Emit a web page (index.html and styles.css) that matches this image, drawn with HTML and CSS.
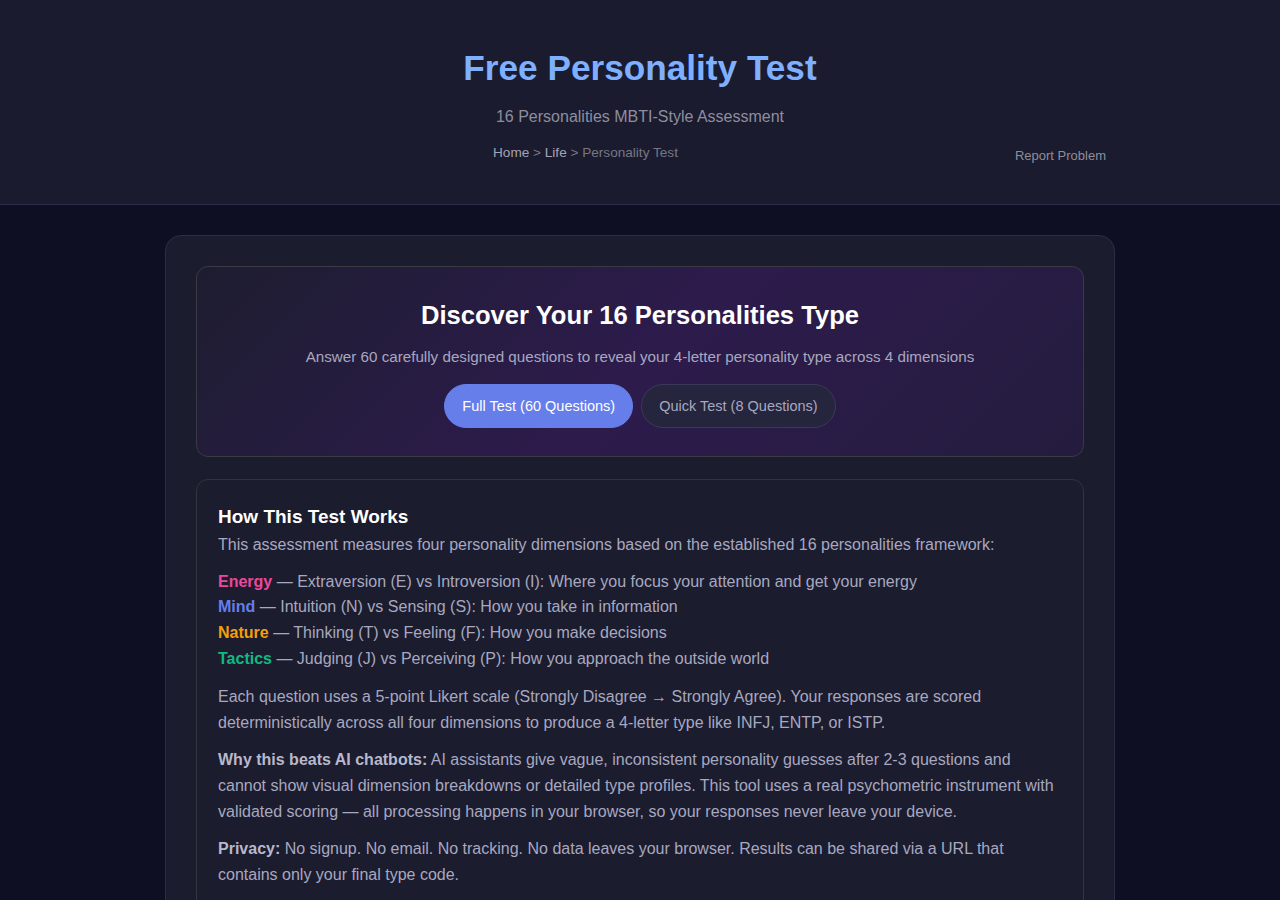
FILE: index.html
```html
<!DOCTYPE html>
<html lang="en">
<head>
  <meta charset="UTF-8" />
  <meta name="viewport" content="width=device-width, initial-scale=1.0" />
  <title>Free Personality Test</title>
  <link rel="stylesheet" href="styles.css">
</head>
<body>
  <header class="site-header">
    <h1>Free Personality Test</h1>
    <p class="tagline">16 Personalities MBTI-Style Assessment</p>
    <div class="header-row">
      <nav class="breadcrumb">
        <a href="#">Home</a> &gt; <a href="#">Life</a> &gt; <span>Personality Test</span>
      </nav>
      <button class="report-btn">Report Problem</button>
    </div>
  </header>

  <main class="container">
    <section class="intro">
      <h2>Discover Your 16 Personalities Type</h2>
      <p class="intro-text">Answer 60 carefully designed questions to reveal your 4-letter personality type across 4 dimensions</p>
      <div class="mode-buttons">
        <button class="mode-btn active">Full Test (60 Questions)</button>
        <button class="mode-btn">Quick Test (8 Questions)</button>
      </div>
    </section>

    <section class="info">
      <h3>How This Test Works</h3>
      <p class="lead">This assessment measures four personality dimensions based on the established 16 personalities framework:</p>
      <ul class="dims">
        <li><strong class="energy">Energy</strong> — Extraversion (E) vs Introversion (I): Where you focus your attention and get your energy</li>
        <li><strong class="mind">Mind</strong> — Intuition (N) vs Sensing (S): How you take in information</li>
        <li><strong class="nature">Nature</strong> — Thinking (T) vs Feeling (F): How you make decisions</li>
        <li><strong class="tactics">Tactics</strong> — Judging (J) vs Perceiving (P): How you approach the outside world</li>
      </ul>
      <p>Each question uses a 5-point Likert scale (Strongly Disagree → Strongly Agree). Your responses are scored deterministically across all four dimensions to produce a 4-letter type like INFJ, ENTP, or ISTP.</p>
      <p><strong>Why this beats AI chatbots:</strong> AI assistants give vague, inconsistent personality guesses after 2-3 questions and cannot show visual dimension breakdowns or detailed type profiles. This tool uses a real psychometric instrument with validated scoring — all processing happens in your browser, so your responses never leave your device.</p>
      <p><strong>Privacy:</strong> No signup. No email. No tracking. No data leaves your browser. Results can be shared via a URL that contains only your final type code.</p>
    </section>
  </main>
</body>
</html>
```

FILE: styles.css
```css
body {
  margin: 0;
  padding: 0;
  font-family: 'Liberation Sans', Arial, sans-serif;
  background: #0f0f23;
  color: #a8a8c0;
}

.site-header {
  background: #1a1b2e;
  border-bottom: 1px solid #2a2b48;
  padding: 47px 20px 35px;
  text-align: center;
}

.site-header h1 {
  margin: 0;
  font-size: 35.2px;
  font-weight: 700;
  color: #7fb0ff;
  line-height: 1.2;
}

.tagline {
  margin: 19px 0 0;
  font-size: 16px;
  color: #8e8e9e;
}

.header-row {
  max-width: 950px;
  margin: 16px auto 0;
  display: flex;
  align-items: center;
}

.breadcrumb {
  flex: 1;
  font-size: 13.6px;
  color: #777784;
  text-align: center;
  padding-bottom: 6px;
}

.breadcrumb a {
  color: #a3a3b5;
  text-decoration: none;
}

.breadcrumb span {
  color: #777784;
}

.report-btn {
  background: none;
  border: none;
  color: #8e8e9a;
  font-family: inherit;
  font-size: 13px;
  padding: 6px 9px;
  cursor: pointer;
}

.container {
  max-width: 888px;
  margin: 30px auto 0;
  padding: 30px;
  background: #1b1c2e;
  border: 1px solid #2c2d4a;
  border-radius: 16px;
}

.intro {
  text-align: center;
  padding: 34px 30px 28px;
  border: 1px solid #3a3a44;
  border-radius: 12px;
  background: linear-gradient(135deg, #1d1d30 0%, #2d1b4c 50%, #241c3e 100%);
}

.intro h2 {
  margin: 0;
  font-size: 25.6px;
  font-weight: 700;
  color: #fff;
}

.intro-text {
  margin: 18px 0 0;
  font-size: 15.2px;
  color: #a8a8c0;
}

.mode-buttons {
  margin-top: 19px;
  display: flex;
  justify-content: center;
  gap: 8px;
}

.mode-btn {
  font-family: inherit;
  font-size: 14.5px;
  line-height: 17px;
  padding: 13px 17px 12px;
  border-radius: 22px;
  border: 1px solid #3a3a58;
  background: #25253d;
  color: #a8a8c0;
  cursor: pointer;
}

.mode-btn.active {
  background: #667eea;
  border-color: #667eea;
  color: #fff;
}

.info {
  margin-top: 22px;
  padding: 26px 21px 24px;
  border: 1px solid #34343e;
  border-radius: 12px;
  background: #1b1c2e;
}

.info h3 {
  margin: 0 0 4px;
  font-size: 19px;
  color: #fff;
}

.info p {
  margin: 0 0 12px;
  font-size: 16px;
  line-height: 1.6;
}

.info p.lead {
  margin-bottom: 11px;
}

.info p strong {
  color: #b8b8cc;
}

.dims {
  list-style: none;
  margin: 0 0 13px;
  padding: 0;
  font-size: 16px;
  line-height: 1.6;
}

.energy { color: #ec4899; }
.mind { color: #667eea; }
.nature { color: #f59e0b; }
.tactics { color: #10b981; }
```
